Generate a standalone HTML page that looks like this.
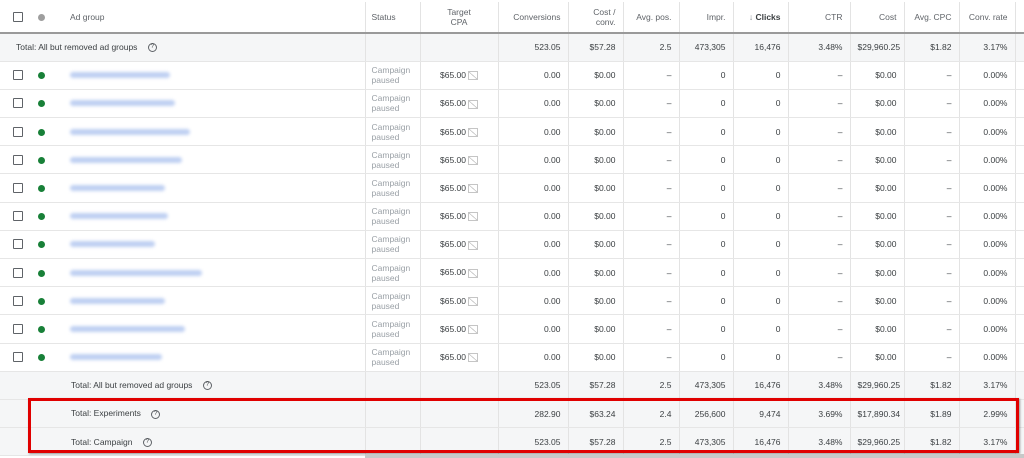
<!DOCTYPE html>
<html><head><meta charset="utf-8"><style>
*{margin:0;padding:0;box-sizing:border-box}
body{width:1024px;height:458px;background:#fff;font-family:"Liberation Sans",Arial,sans-serif;font-size:8.5px;color:#3c4043;position:relative;overflow:hidden}
table{position:absolute;left:0;top:2px;border-collapse:collapse;table-layout:fixed;width:1024px}
td{border-bottom:1px solid #e6e6e6;text-align:right;padding:0 7px;white-space:nowrap;height:28.2px;vertical-align:middle}
td.v{border-left:1px solid #e3e3e3}
tr.h td{height:31px;color:#5f6368;border-bottom:2px solid #9a9a9a;line-height:10px}
tr.t td{background:#f5f6f7}
.cb{display:inline-block;width:10px;height:10px;border:1.5px solid #5f6368;border-radius:1px;position:absolute;left:13px;top:calc(50% - 5px)}
.dot{display:inline-block;width:7px;height:7px;border-radius:50%;background:#188038;position:absolute;left:38px;top:calc(50% - 3px)}
.f{position:relative;text-align:left;padding:0}
.nm{position:absolute;left:70px;top:calc(50% - 3px);width:100px;height:6px;background:#bfd0f2;filter:blur(1.5px);border-radius:3px}
.lbl{position:absolute;left:70px;top:calc(50% - 5px)}
.st{color:#9aa0a6;text-align:left;line-height:10px;padding-left:6px}
.q{display:inline-block;width:9px;height:9px;border:1px solid #5f6368;border-radius:50%;font-size:6px;line-height:7px;text-align:center;margin-left:8px;vertical-align:middle}
.ic{display:inline-block;width:10px;height:9px;border:1px solid #c5c5c5;vertical-align:middle;margin-left:2px;background:linear-gradient(to top right,transparent 45%,#c5c5c5 47%,#c5c5c5 53%,transparent 55%)}
.box{position:absolute;left:28px;top:398px;width:991px;height:55px;border:3px solid #e00000;box-shadow:1px 1px 2px rgba(0,0,0,.4)}
.sb{position:absolute;left:365px;top:454px;width:659px;height:4px;background:#c8c8c8}
</style></head><body>
<table>
<colgroup><col style="width:365px"><col style="width:55px"><col style="width:78px"><col style="width:70px"><col style="width:55px"><col style="width:56px"><col style="width:54px"><col style="width:55px"><col style="width:62px"><col style="width:54px"><col style="width:55px"><col style="width:56px"><col style="width:9px"></colgroup>
<tr class="h"><td class="f"><span class="cb"></span><span class="dot" style="background:#9e9e9e"></span><span class="lbl">Ad group</span></td><td class="v" style="text-align:left;padding-left:6px">Status</td><td class="v" style="text-align:center">Target<br>CPA</td><td class="v">Conversions</td><td class="v">Cost /<br>conv.</td><td class="v">Avg. pos.</td><td class="v">Impr.</td><td class="v" style="color:#3c4043;font-weight:bold"><span style="font-weight:normal;color:#80868b">↓</span> Clicks</td><td class="v">CTR</td><td class="v">Cost</td><td class="v">Avg. CPC</td><td class="v">Conv. rate</td><td class="v"></td></tr>
<tr class="t"><td style="text-align:left;padding-left:16px">Total: All but removed ad groups <span class="q">?</span></td><td class="v"></td><td class="v"></td><td class="v">523.05</td><td class="v">$57.28</td><td class="v">2.5</td><td class="v">473,305</td><td class="v">16,476</td><td class="v">3.48%</td><td class="v">$29,960.25</td><td class="v">$1.82</td><td class="v">3.17%</td><td class="v"></td></tr>
<tr><td class="f"><span class="cb"></span><span class="dot"></span><span class="nm"></span></td><td class="v st">Campaign<br>paused</td><td class="v" style="text-align:center">$65.00<span class="ic"></span></td><td class="v">0.00</td><td class="v">$0.00</td><td class="v">–</td><td class="v">0</td><td class="v">0</td><td class="v">–</td><td class="v">$0.00</td><td class="v">–</td><td class="v">0.00%</td><td class="v"></td></tr>
<tr><td class="f"><span class="cb"></span><span class="dot"></span><span class="nm" style="width:105px"></span></td><td class="v st">Campaign<br>paused</td><td class="v" style="text-align:center">$65.00<span class="ic"></span></td><td class="v">0.00</td><td class="v">$0.00</td><td class="v">–</td><td class="v">0</td><td class="v">0</td><td class="v">–</td><td class="v">$0.00</td><td class="v">–</td><td class="v">0.00%</td><td class="v"></td></tr>
<tr><td class="f"><span class="cb"></span><span class="dot"></span><span class="nm" style="width:120px"></span></td><td class="v st">Campaign<br>paused</td><td class="v" style="text-align:center">$65.00<span class="ic"></span></td><td class="v">0.00</td><td class="v">$0.00</td><td class="v">–</td><td class="v">0</td><td class="v">0</td><td class="v">–</td><td class="v">$0.00</td><td class="v">–</td><td class="v">0.00%</td><td class="v"></td></tr>
<tr><td class="f"><span class="cb"></span><span class="dot"></span><span class="nm" style="width:112px"></span></td><td class="v st">Campaign<br>paused</td><td class="v" style="text-align:center">$65.00<span class="ic"></span></td><td class="v">0.00</td><td class="v">$0.00</td><td class="v">–</td><td class="v">0</td><td class="v">0</td><td class="v">–</td><td class="v">$0.00</td><td class="v">–</td><td class="v">0.00%</td><td class="v"></td></tr>
<tr><td class="f"><span class="cb"></span><span class="dot"></span><span class="nm" style="width:95px"></span></td><td class="v st">Campaign<br>paused</td><td class="v" style="text-align:center">$65.00<span class="ic"></span></td><td class="v">0.00</td><td class="v">$0.00</td><td class="v">–</td><td class="v">0</td><td class="v">0</td><td class="v">–</td><td class="v">$0.00</td><td class="v">–</td><td class="v">0.00%</td><td class="v"></td></tr>
<tr><td class="f"><span class="cb"></span><span class="dot"></span><span class="nm" style="width:98px"></span></td><td class="v st">Campaign<br>paused</td><td class="v" style="text-align:center">$65.00<span class="ic"></span></td><td class="v">0.00</td><td class="v">$0.00</td><td class="v">–</td><td class="v">0</td><td class="v">0</td><td class="v">–</td><td class="v">$0.00</td><td class="v">–</td><td class="v">0.00%</td><td class="v"></td></tr>
<tr><td class="f"><span class="cb"></span><span class="dot"></span><span class="nm" style="width:85px"></span></td><td class="v st">Campaign<br>paused</td><td class="v" style="text-align:center">$65.00<span class="ic"></span></td><td class="v">0.00</td><td class="v">$0.00</td><td class="v">–</td><td class="v">0</td><td class="v">0</td><td class="v">–</td><td class="v">$0.00</td><td class="v">–</td><td class="v">0.00%</td><td class="v"></td></tr>
<tr><td class="f"><span class="cb"></span><span class="dot"></span><span class="nm" style="width:132px"></span></td><td class="v st">Campaign<br>paused</td><td class="v" style="text-align:center">$65.00<span class="ic"></span></td><td class="v">0.00</td><td class="v">$0.00</td><td class="v">–</td><td class="v">0</td><td class="v">0</td><td class="v">–</td><td class="v">$0.00</td><td class="v">–</td><td class="v">0.00%</td><td class="v"></td></tr>
<tr><td class="f"><span class="cb"></span><span class="dot"></span><span class="nm" style="width:95px"></span></td><td class="v st">Campaign<br>paused</td><td class="v" style="text-align:center">$65.00<span class="ic"></span></td><td class="v">0.00</td><td class="v">$0.00</td><td class="v">–</td><td class="v">0</td><td class="v">0</td><td class="v">–</td><td class="v">$0.00</td><td class="v">–</td><td class="v">0.00%</td><td class="v"></td></tr>
<tr><td class="f"><span class="cb"></span><span class="dot"></span><span class="nm" style="width:115px"></span></td><td class="v st">Campaign<br>paused</td><td class="v" style="text-align:center">$65.00<span class="ic"></span></td><td class="v">0.00</td><td class="v">$0.00</td><td class="v">–</td><td class="v">0</td><td class="v">0</td><td class="v">–</td><td class="v">$0.00</td><td class="v">–</td><td class="v">0.00%</td><td class="v"></td></tr>
<tr><td class="f"><span class="cb"></span><span class="dot"></span><span class="nm" style="width:92px"></span></td><td class="v st">Campaign<br>paused</td><td class="v" style="text-align:center">$65.00<span class="ic"></span></td><td class="v">0.00</td><td class="v">$0.00</td><td class="v">–</td><td class="v">0</td><td class="v">0</td><td class="v">–</td><td class="v">$0.00</td><td class="v">–</td><td class="v">0.00%</td><td class="v"></td></tr>
<tr class="t"><td style="text-align:left;padding-left:71px">Total: All but removed ad groups <span class="q">?</span></td><td class="v"></td><td class="v"></td><td class="v">523.05</td><td class="v">$57.28</td><td class="v">2.5</td><td class="v">473,305</td><td class="v">16,476</td><td class="v">3.48%</td><td class="v">$29,960.25</td><td class="v">$1.82</td><td class="v">3.17%</td><td class="v"></td></tr>
<tr class="t"><td style="text-align:left;padding-left:71px">Total: Experiments <span class="q">?</span></td><td class="v"></td><td class="v"></td><td class="v">282.90</td><td class="v">$63.24</td><td class="v">2.4</td><td class="v">256,600</td><td class="v">9,474</td><td class="v">3.69%</td><td class="v">$17,890.34</td><td class="v">$1.89</td><td class="v">2.99%</td><td class="v"></td></tr>
<tr class="t"><td style="text-align:left;padding-left:71px">Total: Campaign <span class="q">?</span></td><td class="v"></td><td class="v"></td><td class="v">523.05</td><td class="v">$57.28</td><td class="v">2.5</td><td class="v">473,305</td><td class="v">16,476</td><td class="v">3.48%</td><td class="v">$29,960.25</td><td class="v">$1.82</td><td class="v">3.17%</td><td class="v"></td></tr>
</table>
<div class="box"></div>
<div class="sb"></div>
</body></html>
